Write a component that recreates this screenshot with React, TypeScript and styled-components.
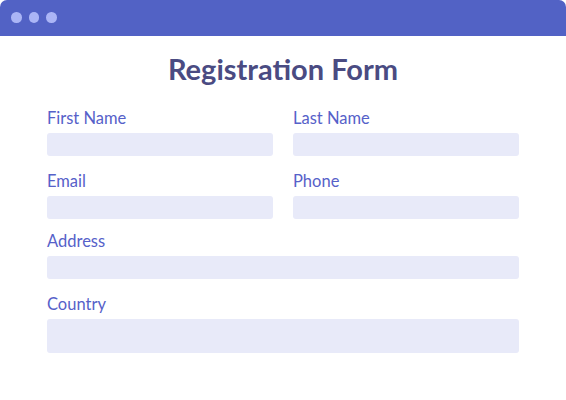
import React from "react";
import styled, { createGlobalStyle } from "styled-components";

const GlobalStyle = createGlobalStyle`
  html, body { margin: 0; padding: 0; background: #ffffff; }
  body { font-family: "Lato", "Open Sans", sans-serif; }
  * { box-sizing: border-box; }
`;

const Window = styled.div`
  width: 566px;
  height: 400px;
  background: #ffffff;
  display: flex;
  flex-direction: column;
`;

const TitleBar = styled.div`
  height: 36px;
  flex-shrink: 0;
  background: #5262c5;
  border-radius: 7px 7px 0 0;
  display: flex;
  align-items: center;
  gap: 7px;
  padding-left: 11px;
  padding-bottom: 1px;
`;

const Dot = styled.span`
  flex-shrink: 0;
  width: 10.5px;
  height: 10.5px;
  border-radius: 50%;
  background: #abb5f6;
`;

const Body = styled.div`
  padding: 15px 47px 0;
  display: flex;
  flex-direction: column;
`;

const Title = styled.h1`
  margin: 0 0 21px;
  font-family: "Lato", sans-serif;
  font-weight: 700;
  font-size: 29px;
  line-height: 35px;
  color: #4a4b82;
  text-align: center;
`;

const Grid = styled.div`
  display: grid;
  grid-template-columns: 1fr 1fr;
  column-gap: 20px;
  row-gap: 14px;
`;

const Field = styled.div<{ $wide?: boolean; $tight?: boolean }>`
  display: flex;
  flex-direction: column;
  grid-column: ${(p) => (p.$wide ? "1 / -1" : "auto")};
  margin-top: ${(p) => (p.$tight ? -3 : 0)}px;
`;

const Label = styled.label`
  font-family: "Lato", sans-serif;
  font-size: 16.5px;
  line-height: 20px;
  color: #5661c9;
  padding-top: 1px;
  margin-bottom: 5px;
`;

const Input = styled.div<{ $tall?: boolean }>`
  height: ${(p) => (p.$tall ? 34 : 23)}px;
  background: #e8eaf9;
  border-radius: 3px;
`;

export default function App() {
  return (
    <>
      <GlobalStyle />
      <Window>
        <TitleBar>
          <Dot />
          <Dot />
          <Dot />
        </TitleBar>
        <Body>
          <Title>Registration Form</Title>
          <Grid>
            <Field>
              <Label>First Name</Label>
              <Input />
            </Field>
            <Field>
              <Label>Last Name</Label>
              <Input />
            </Field>
            <Field>
              <Label>Email</Label>
              <Input />
            </Field>
            <Field>
              <Label>Phone</Label>
              <Input />
            </Field>
            <Field $wide $tight>
              <Label>Address</Label>
              <Input />
            </Field>
            <Field $wide>
              <Label>Country</Label>
              <Input $tall />
            </Field>
          </Grid>
        </Body>
      </Window>
    </>
  );
}
